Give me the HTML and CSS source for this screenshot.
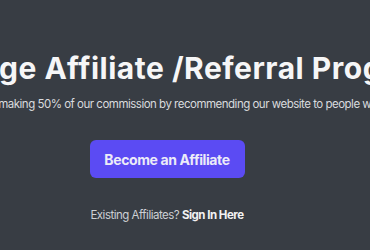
FILE: index.html
```html
<!DOCTYPE html>
<html lang="en">
<head>
<meta charset="UTF-8">
<meta name="viewport" content="width=device-width, initial-scale=1.0">
<title>Affiliate Program</title>
<link rel="stylesheet" href="styles.css">
</head>
<body>

<div class="hero">
<h1 class="title">Our Huge Affiliate /Referral Program</h1>
<p class="lead">You can simply start making 50% of our commission by recommending our website to people who do need it.</p>
<a class="btn" href="#">Become an Affiliate</a>
<p class="signin">Existing Affiliates? <a href="#">Sign In Here</a></p>
</div>

</body>
</html>
```

FILE: styles.css
```css
html, body{
margin:0;
height:100%;
}

body{
background:#383d44;
font-family:Inter, "Liberation Sans", sans-serif;
overflow:hidden;
}

.hero{
width:334px;
padding-top:50px;
display:flex;
flex-direction:column;
align-items:center;
white-space:nowrap;
}

.title{
margin:0;
font-size:30px;
line-height:36px;
font-weight:700;
letter-spacing:0.5px;
color:#f6f6f7;
}

.lead{
margin:10px 0 0;
font-size:11.5px;
line-height:16px;
letter-spacing:-0.5px;
color:#d9dbde;
}

.btn{
margin-top:28px;
width:155px;
height:38px;
box-sizing:border-box;
display:flex;
justify-content:center;
align-items:center;
background:#5b4bf3;
border-radius:6px;
color:#ecebf8;
font-size:14px;
font-weight:700;
letter-spacing:-0.4px;
text-decoration:none;
}

.signin{
margin:29px 0 0;
font-size:11.5px;
line-height:16px;
letter-spacing:-0.5px;
color:#cdd0d4;
}

.signin a{
color:#f2f2f3;
font-weight:700;
text-decoration:none;
}
```
